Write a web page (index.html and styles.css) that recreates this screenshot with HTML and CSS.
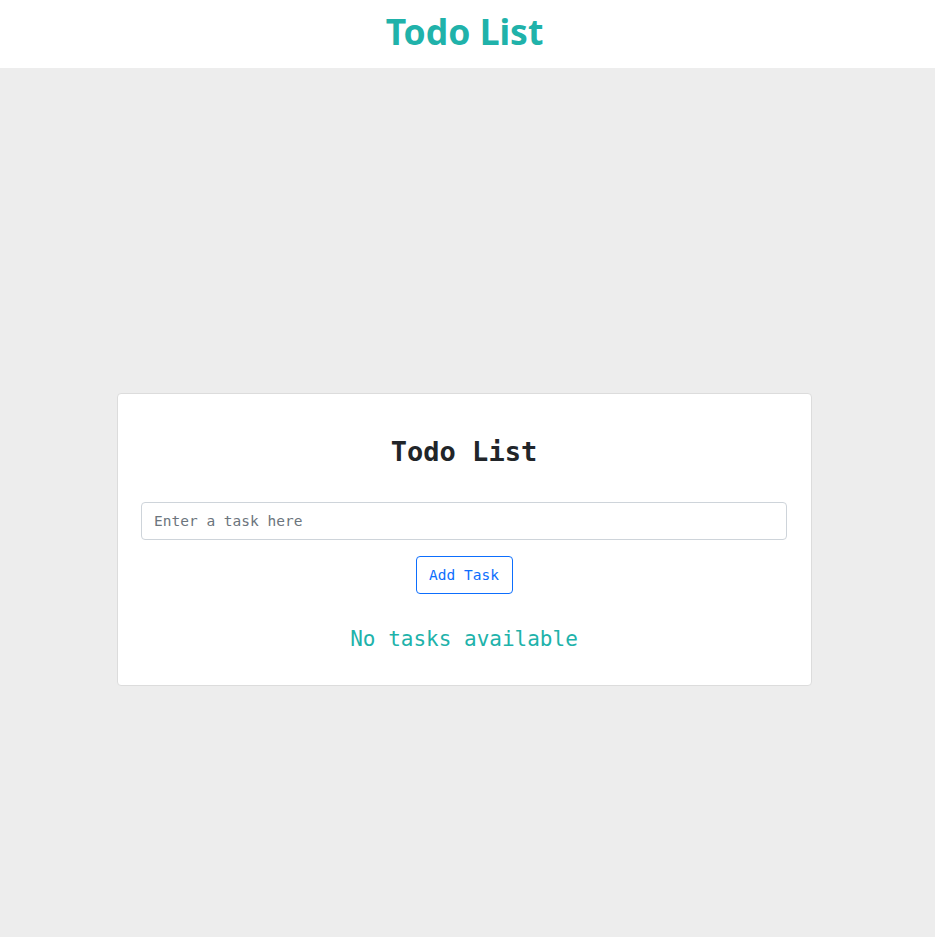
FILE: index.html
```html
<!DOCTYPE html>
<html lang="en">
<head>
<meta charset="utf-8">
<title>Todo List</title>
<link rel="stylesheet" href="styles.css">
</head>
<body>
<header class="site-header">
  <h1 class="site-title">Todo List</h1>
</header>
<main class="main">
  <section class="card">
    <h2 class="card-title">Todo List</h2>
    <input class="task-input" type="text" placeholder="Enter a task here">
    <div class="actions">
      <button class="add-btn" type="button">Add Task</button>
    </div>
    <p class="empty">No tasks available</p>
  </section>
</main>
</body>
</html>
```
FILE: styles.css
```css
* { box-sizing: border-box; }
html, body { margin: 0; padding: 0; }
body {
  background: #ededed;
  font-family: "DejaVu Sans Mono", monospace;
  color: #212529;
}
.site-header {
  background: #fff;
  height: 68px;
  display: flex;
  align-items: center;
  justify-content: center;
  padding-right: 6px;
}
.site-title {
  margin: 0;
  font-family: "Noto Sans", "Open Sans", sans-serif;
  font-weight: 700;
  font-size: 35.5px;
  color: #20b2aa;
  line-height: 1;
  position: relative;
  top: -2px;
}
.main {
  height: 869px;
  padding-top: 325px;
  padding-right: 6px;
}
.card {
  width: 695px;
  height: 293px;
  margin: 0 auto;
  background: #fff;
  border: 1px solid #dcdcdc;
  border-radius: 4px;
  padding: 0 24px 0 23px;
  display: flex;
  flex-direction: column;
}
.card-title {
  margin: 43px 0 0;
  text-align: center;
  font-size: 27px;
  font-weight: 700;
  line-height: 30px;
  color: #212529;
}
.task-input {
  margin-top: 35px;
  width: 100%;
  height: 38px;
  border: 1px solid #ced4da;
  border-radius: 4px;
  padding: 0 12px;
  font-family: "DejaVu Sans Mono", monospace;
  font-size: 14.5px;
  color: #495057;
  outline: none;
}
.task-input::placeholder { color: #6c757d; }
.actions {
  display: flex;
  justify-content: center;
  margin-top: 16px;
}
.add-btn {
  width: 97px;
  height: 38px;
  border: 1px solid #0d6efd;
  border-radius: 4px;
  background: #fff;
  color: #0d6efd;
  font-family: "DejaVu Sans Mono", monospace;
  font-size: 14.5px;
  padding: 0;
  cursor: pointer;
}
.empty {
  margin: 32px 0 0;
  text-align: center;
  font-size: 21px;
  line-height: 26px;
  color: #20b2aa;
}
```
